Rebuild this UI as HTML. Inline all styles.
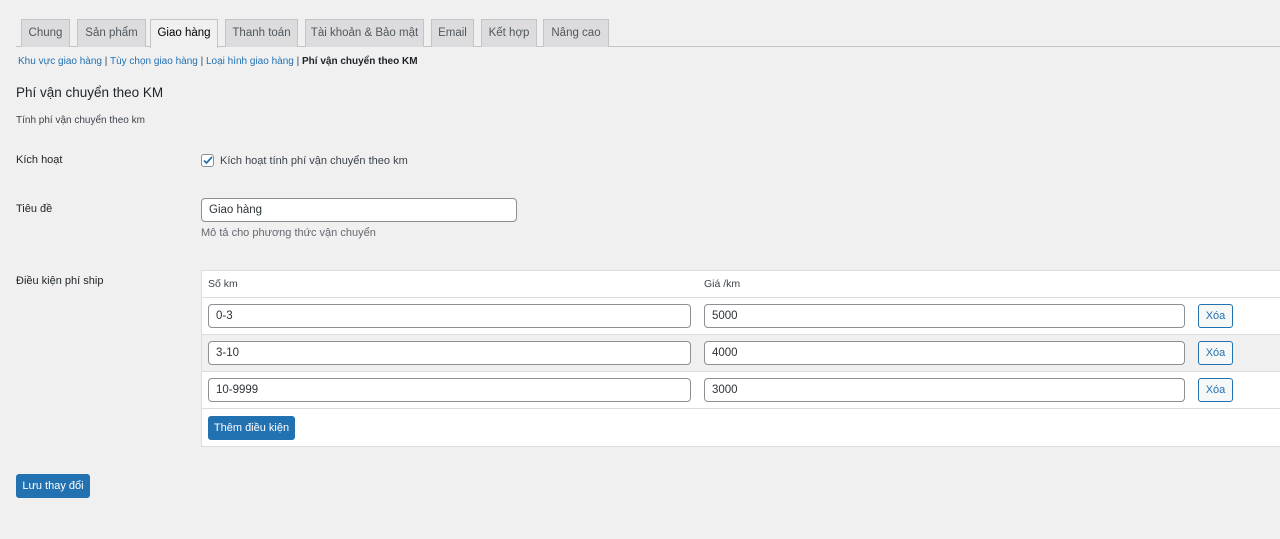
<!DOCTYPE html>
<html><head><meta charset="utf-8">
<style>
*{box-sizing:border-box;margin:0;padding:0}
body{width:1280px;height:539px;background:#f0f0f1;font-family:"Liberation Sans",sans-serif;font-size:13px;color:#3c434a;position:relative;overflow:hidden}
.a{position:absolute;white-space:nowrap}
.tab{position:absolute;top:19px;height:28px;background:#dcdcde;border:1px solid #c3c4c7;border-bottom:none;color:#50575e;font-size:11.5px;line-height:27px;text-align:center;white-space:nowrap}
.tab.on{background:#f0f0f1;color:#000;height:29px}
.line{position:absolute;left:16px;right:0;top:46px;border-top:1px solid #c3c4c7}
a{color:#2271b1;text-decoration:none}
.inp{position:absolute;height:24px;background:#fff;border:1px solid #8c8f94;border-radius:4px;padding-left:7px;line-height:22px;font-size:11.5px;color:#2c3338}
.btn{position:absolute;background:#2271b1;color:#fff;border-radius:3px;font-size:11px;display:flex;align-items:center;justify-content:center}
.del{position:absolute;left:1198px;width:35px;height:24px;border:1px solid #2271b1;border-radius:3px;background:#f6f7f7;color:#2271b1;font-size:11px;display:flex;align-items:center;justify-content:center}
.row{position:absolute;left:202px;right:0;border-top:1px solid #dcdcde}
</style></head><body>
<div class="line"></div>
<div class="tab" style="left:21px;width:49px">Chung</div>
<div class="tab" style="left:77px;width:69px">Sản phẩm</div>
<div class="tab on" style="left:150px;width:68px">Giao hàng</div>
<div class="tab" style="left:225px;width:73px">Thanh toán</div>
<div class="tab" style="left:305px;width:119px">Tài khoản &amp; Bảo mật</div>
<div class="tab" style="left:431px;width:43px">Email</div>
<div class="tab" style="left:481px;width:56px">Kết hợp</div>
<div class="tab" style="left:543px;width:66px">Nâng cao</div>

<div class="a" style="left:18px;top:56px;font-size:10px"><a>Khu vực giao hàng</a> | <a>Tùy chọn giao hàng</a> | <a>Loại hình giao hàng</a> | <b style="color:#1d2327">Phí vận chuyển theo KM</b></div>

<div class="a" style="left:16px;top:85px;font-size:13.5px;color:#1d2327">Phí vận chuyển theo KM</div>
<div class="a" style="left:16px;top:115px;font-size:10px">Tính phí vận chuyển theo km</div>

<div class="a" style="left:16px;top:154px;font-size:11px;color:#1d2327">Kích hoạt</div>
<div class="a" style="left:201px;top:154px;width:13px;height:13px;background:#fff;border:1px solid #8c8f94;border-radius:3px"></div>
<svg class="a" style="left:202px;top:154px" width="12" height="12" viewBox="0 0 12 12"><path d="M2 6.5l2.5 2.5L10 3" fill="none" stroke="#2271b1" stroke-width="1.8"/></svg>
<div class="a" style="left:220px;top:155px;font-size:11px">Kích hoạt tính phí vận chuyển theo km</div>

<div class="a" style="left:16px;top:203px;font-size:11px;color:#1d2327">Tiêu đề</div>
<div class="inp" style="left:201px;top:198px;width:316px;height:24px">Giao hàng</div>
<div class="a" style="left:201px;top:227px;font-size:11px;color:#646970">Mô tả cho phương thức vận chuyển</div>

<div class="a" style="left:16px;top:275px;font-size:11px;color:#1d2327">Điều kiện phí ship</div>

<div class="a" style="left:201px;top:270px;right:-2px;height:177px;background:#fff;border:1px solid #dcdcde"></div>
<div class="a" style="left:208px;top:278px;font-size:10.5px">Số km</div>
<div class="a" style="left:704px;top:278px;font-size:10.5px">Giá /km</div>
<div class="row" style="top:297px;height:37px"></div>
<div class="row" style="top:334px;height:37px;background:#f0f0f1"></div>
<div class="row" style="top:371px;height:37px"></div>
<div class="row" style="top:408px;height:38px"></div>

<div class="inp" style="left:208px;top:304px;width:483px">0-3</div>
<div class="inp" style="left:704px;top:304px;width:481px">5000</div>
<div class="del" style="top:304px">Xóa</div>
<div class="inp" style="left:208px;top:341px;width:483px">3-10</div>
<div class="inp" style="left:704px;top:341px;width:481px">4000</div>
<div class="del" style="top:341px">Xóa</div>
<div class="inp" style="left:208px;top:378px;width:483px">10-9999</div>
<div class="inp" style="left:704px;top:378px;width:481px">3000</div>
<div class="del" style="top:378px">Xóa</div>

<div class="btn" style="left:208px;top:416px;width:87px;height:24px">Thêm điều kiện</div>
<div class="btn" style="left:16px;top:474px;width:74px;height:24px">Lưu thay đổi</div>
</body></html>
